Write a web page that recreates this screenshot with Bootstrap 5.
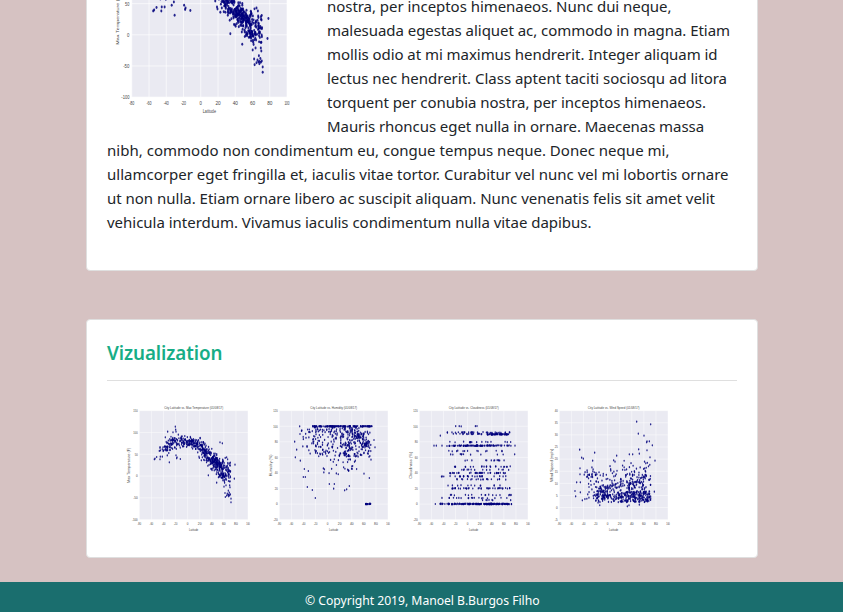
<!DOCTYPE html>
<html lang="en">
<head>
<meta charset="utf-8">
<meta name="viewport" content="width=device-width, initial-scale=1">
<title>Latitude Analysis</title>
<link rel="stylesheet" href="https://cdn.jsdelivr.net/npm/bootstrap@5.3.0/dist/css/bootstrap.min.css">
<style>
html,body{height:612px;overflow:hidden}
body{background:#d6c2c2;font-family:"Noto Sans","Open Sans",sans-serif;font-size:15px;line-height:24px;color:#212529}
.page-wrap{width:672px;margin-left:86px}
.panel{--bs-card-border-color:#dfdfdf;--bs-card-border-radius:4px;--bs-card-inner-border-radius:3px}
.panel .card-body{padding:20px}
.panel-article{margin-top:-102px;height:373px}
.panel-visual{margin-top:48px;height:239px}
.article-text{padding-top:75px}
.main-plot{width:200px;height:200px;margin:0 20px 10px 0}
.line{display:block;white-space:nowrap}
.panel-title{font-size:18.8px;line-height:24px;font-weight:600;color:#17ad86;margin:1px 0 15px}
.rule{border-top:1px solid #dfdfdf;opacity:1;margin:0 0 14px}
.thumb-row{padding-left:15px}
.thumb-plot{width:140px;height:140px}
.site-footer{margin-top:24px;height:30px;background:#1a6e6e;color:#fff;font-size:12.2px;line-height:20px;padding:9px 0 0 305px}
svg text{font-family:"Liberation Sans",sans-serif;fill:#444}
</style>
</head>
<body>
<main class="page-wrap">
  <section class="card panel panel-article">
    <div class="card-body">
      <svg class="main-plot float-start" viewBox="6 -9 420 420" data-plot="temp"></svg>
      <p class="article-text mb-3">
        <span class="line"><span data-w="344.5">nostra, per inceptos himenaeos. Nunc dui neque,</span></span>
        <span class="line"><span data-w="403">malesuada egestas aliquet ac, commodo in magna. Etiam</span></span>
        <span class="line"><span data-w="390.5">mollis odio at mi maximus hendrerit. Integer aliquam id</span></span>
        <span class="line"><span data-w="400">lectus nec hendrerit. Class aptent taciti sociosqu ad litora</span></span>
        <span class="line"><span data-w="379">torquent per conubia nostra, per inceptos himenaeos.</span></span>
        <span class="line"><span data-w="377">Mauris rhoncus eget nulla in ornare. Maecenas massa</span></span>
        <span class="line"><span data-w="562.5">nibh, commodo non condimentum eu, congue tempus neque. Donec neque mi,</span></span>
        <span class="line"><span data-w="621.5">ullamcorper eget fringilla et, iaculis vitae tortor. Curabitur vel nunc vel mi lobortis ornare</span></span>
        <span class="line"><span data-w="608">ut non nulla. Etiam ornare libero ac suscipit aliquam. Nunc venenatis felis sit amet velit</span></span>
        <span class="line"><span data-w="484.5">vehicula interdum. Vivamus iaculis condimentum nulla vitae dapibus.</span></span>
      </p>
    </div>
  </section>
  <section class="card panel panel-visual">
    <div class="card-body">
      <h4 class="panel-title"><span data-w="115.5">Vizualization</span></h4>
      <hr class="rule">
      <div class="d-flex thumb-row">
        <svg class="thumb-plot" viewBox="6 -9 420 420" data-plot="temp"></svg>
        <svg class="thumb-plot" viewBox="6 -9 420 420" data-plot="humid"></svg>
        <svg class="thumb-plot" viewBox="6 -9 420 420" data-plot="cloud"></svg>
        <svg class="thumb-plot" viewBox="6 -9 420 420" data-plot="wind"></svg>
      </div>
    </div>
  </section>
</main>
<footer class="site-footer"><span data-w="234.5">© Copyright 2019, Manoel B.Burgos Filho</span></footer>
<script src="https://cdn.jsdelivr.net/npm/bootstrap@5.3.0/dist/js/bootstrap.bundle.min.js"></script>
<script>
document.querySelectorAll('[data-w]').forEach(s=>{
  const w=s.getBoundingClientRect().width;
  s.style.letterSpacing=((+s.dataset.w-w)/s.textContent.length)+'px';
});

// Repeatable random numbers, so both temperature plots are identical.
let seed=7;
const rnd=()=>(seed=(seed*16807)%2147483647)/2147483647;
const gauss=()=>(rnd()+rnd()+rnd()-1.5)/0.6;
const box=(n,x0,x1,y0,y1)=>Array.from({length:n},()=>[x0+rnd()*(x1-x0),y0+rnd()*(y1-y0)]);
const blob=(n,x,y,sx,sy)=>Array.from({length:n},()=>[x+gauss()*sx,y+gauss()*sy]);
function curve(n,knots,lo,hi){
  return Array.from({length:n},()=>{
    const x=lo+rnd()*(hi-lo);
    let i=1; while(i<knots.length-1&&knots[i][0]<x)i++;
    const [a,b]=[knots[i-1],knots[i]], t=(x-a[0])/(b[0]-a[0]);
    return [x,a[1]+t*(b[1]-a[1])+gauss()*(a[2]+t*(b[2]-a[2]))];
  });
}
const plots={
  temp:{title:'City Latitude vs. Max Temperature (01/08/17)',tw:177,y:'Max Temperature (F)',yl:106,yx:30,ticks:['150','100','50','0','-50','-100'],pts(){
    const k=[[118,160,8],[140,150,12],[160,136,11],[180,132,9],[200,131,8],[225,134,10],[240,143,12],[255,161,14],[268,179,15],[290,197,17],[310,213,21],[333,220,21]];
    return [...curve(30,k,118,145),...curve(190,k,145,245),...curve(165,k,245,290),...curve(125,k,285,332),
      ...blob(30,295,197,9,6),...blob(22,308,230,8,8),
      [103,184],[105,182],[110,177],[120,184],[121,176],[127,176],[148,193],[168,172],[170,181],[171,178],[181,183],[237,176],[238,180],[244,187],
      [166,86],[143,101],[159,103],[167,95],[168,101],[136,118],[175,110],[300,133],[307,136],[345,200],[343,242],[265,232],[290,254],[333,313],
      [313,250],[318,262],[312,266],[329,262],[330,268],[325,278],[328,284],[315,285],[322,287],[324,291],[326,295],[329,292],[316,297],[333,302],[331,289],[320,293],[326,290],[327,240],[330,250],[319,245]];
  }},
  humid:{title:'City Latitude vs. Humidity (01/08/17)',tw:140,y:'Humidity (%)',yl:65,yx:35,ticks:['120','100','80','60','40','20','0','-20'],pts(){
    return [...box(95,158,303,84,86),...box(24,305,336,84,86),...box(50,160,300,88,102),...box(32,120,170,94,168),...box(75,165,245,98,175),...box(135,240,333,101,178),
      ...blob(28,292,116,12,5),...blob(22,315,139,8,4),...blob(18,260,148,8,16),...box(28,245,300,160,220),...box(14,188,240,170,230),
      ...box(17,315,336,317,319),[317,318],[119,85],[120,108],[104,131],[110,155],[106,178],[121,188],[133,213],[130,237],[136,237],[142,267],[157,276],[166,300],[145,219],[208,258],[221,272],[223,258],[254,277],[260,274],[268,264],[312,227],[328,240],[342,126],[345,148],[333,185]];
  }},
  cloud:{title:'City Latitude vs. Cloudiness (01/08/17)',tw:150,y:'Cloudiness (%)',yl:80,yx:35,ticks:['120','100','80','60','40','20','0','-20'],pts(){
    let a=[];
    [[85,167,268,5],[103,140,260,17],[108,148,245,18],[104,258,333,15],[109,262,326,50],[132,145,333,16],[143,130,190,17],[143,190,333,68],[159,140,333,14],[169,150,325,10],[187,157,330,13],[206,155,334,22],[215,175,330,14],[225,148,318,37],[235,118,320,26],[244,140,335,20],[262,135,312,12],[271,153,330,38],[291,148,335,17],[300,119,330,19],[306,235,335,7],[318,120,195,40],[318,196,335,130]].forEach(r=>a.push(...box(r[3],r[1],r[2],r[0]-1,r[0]+1)));
    return [...a,[102,143],[109,143],[126,143],[106,318],[121,113],[142,103],[344,169],[345,143]];
  }},
  wind:{title:'City Latitude vs. Wind Speed (01/08/17)',tw:155,y:'Wind Speed (mph)',yl:98,yx:37,ticks:['40','35','30','25','20','15','10','5','0','-5'],pts(){
    return [...box(190,232,333,280,313),...blob(62,191,291,16,15),...box(75,165,235,260,314),...box(28,132,172,208,310),...box(40,140,235,210,270),...box(100,235,332,230,284),...blob(28,295,260,18,22),...box(27,245,332,188,230),...box(12,210,232,200,270),
      [290,71],[332,79],[295,107],[312,113],[321,130],[328,130],[320,133],[337,142],[296,154],[298,167],[321,157],[119,155],[164,164],[125,179],[130,182],[158,188],[230,173],[268,169],[278,169],[330,178],[345,188],[221,187],[225,191],[105,279],[107,295],[110,253],[121,253],[121,283],[120,211],[120,229],[127,307],[343,281],[262,325],[267,322],[298,320]];
  }}
};
const cache={};
document.querySelectorAll('[data-plot]').forEach(svg=>{
  const key=svg.dataset.plot,p=plots[key],big=svg.classList.contains('main-plot');
  cache[key]=cache[key]||p.pts();
  const X=58,Y=38,W=326,H=327;
  let s=`<rect x="${X}" y="${Y}" width="${W}" height="${H}" fill="#eaeaf2"/>`;
  for(let i=0;i<10;i++){
    const x=X+W*i/9;
    s+=`<path d="M${x} ${Y}V${Y+H}" stroke="#fff" stroke-width="1.8" stroke-opacity=".75"/>`;
    s+=`<text x="${x}" y="381" font-size="11" text-anchor="middle" textLength="${i==4?5:11}" lengthAdjust="spacingAndGlyphs">${-80+20*i}</text>`;
  }
  p.ticks.forEach((t,i)=>{
    const y=Y+H*i/(p.ticks.length-1);
    s+=`<path d="M${X} ${y}H${X+W}" stroke="#fff" stroke-width="1.8" stroke-opacity=".75"/>`;
    if(big&&i<2)return;
    s+=`<text x="53" y="${y+4}" font-size="11" text-anchor="end" textLength="${t.length*4+1}" lengthAdjust="spacingAndGlyphs">${t}</text>`;
  });
  if(!big)s+=`<text x="221" y="33" font-size="13" text-anchor="middle" textLength="${p.tw}" lengthAdjust="spacingAndGlyphs">${p.title}</text>`;
  s+=`<text x="221" y="398" font-size="12" text-anchor="middle" textLength="28" lengthAdjust="spacingAndGlyphs">Latitude</text>`;
  s+=`<text transform="translate(${p.yx+1} 202) rotate(-90)" font-size="8" text-anchor="middle" textLength="${p.yl}" lengthAdjust="spacingAndGlyphs">${p.y}</text>`;
  s+='<g fill="#00007c" fill-opacity=".85">'+cache[key].map(([x,y])=>`<ellipse cx="${x.toFixed(1)}" cy="${y.toFixed(1)}" rx="${big?2.1:2.1}" ry="${big?3.1:3.3}"/>`).join('')+'</g>';
  svg.innerHTML=s;
});
</script>
</body>
</html>
